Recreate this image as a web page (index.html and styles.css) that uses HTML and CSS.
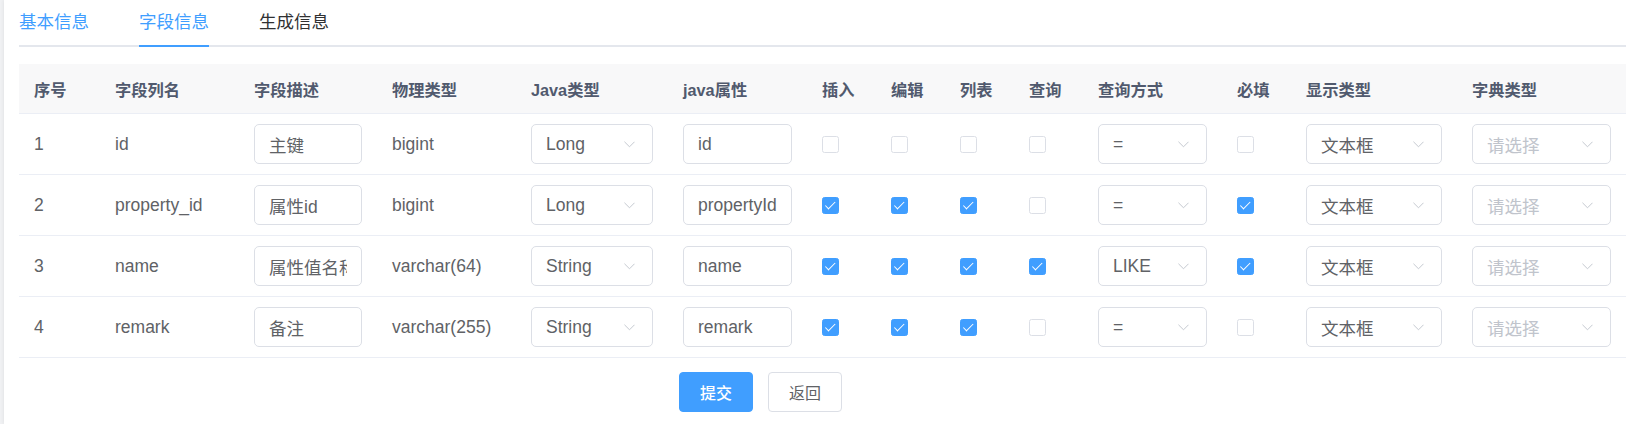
FILE: index.html
```html
<!DOCTYPE html>
<html>
<head>
	<meta charset="utf-8">
	<link rel="stylesheet" href="styles.css">
</head>
<body>
	<div class="card">
		<div class="tabs">
			<div class="tab-item hover">基本信息</div>
			<div class="tab-item active">字段信息</div>
			<div class="tab-item">生成信息</div>
		</div>

		<table class="column-table">
			<colgroup>
				<col style="width:81px"><col style="width:139px"><col style="width:138px"><col style="width:139px">
				<col style="width:152px"><col style="width:139px"><col style="width:69px"><col style="width:69px">
				<col style="width:69px"><col style="width:69px"><col style="width:139px"><col style="width:69px">
				<col style="width:166px"><col>
			</colgroup>
			<thead>
				<tr>
					<th><div class="cell">序号</div></th>
					<th><div class="cell">字段列名</div></th>
					<th><div class="cell">字段描述</div></th>
					<th><div class="cell">物理类型</div></th>
					<th><div class="cell">Java类型</div></th>
					<th><div class="cell">java属性</div></th>
					<th><div class="cell">插入</div></th>
					<th><div class="cell">编辑</div></th>
					<th><div class="cell">列表</div></th>
					<th><div class="cell">查询</div></th>
					<th><div class="cell">查询方式</div></th>
					<th><div class="cell">必填</div></th>
					<th><div class="cell">显示类型</div></th>
					<th><div class="cell">字典类型</div></th>
				</tr>
			</thead>
			<tbody>
				<tr>
					<td><div class="cell">1</div></td>
					<td><div class="cell">id</div></td>
					<td><div class="cell"><input class="input" value="主键"></div></td>
					<td><div class="cell">bigint</div></td>
					<td><div class="cell"><div class="select"><span>Long</span><svg class="arrow" viewBox="0 0 12 7"><polyline points="0.5,0.5 6,6 11.5,0.5"/></svg></div></div></td>
					<td><div class="cell"><input class="input" value="id"></div></td>
					<td><div class="cell"><span class="checkbox"></span></div></td>
					<td><div class="cell"><span class="checkbox"></span></div></td>
					<td><div class="cell"><span class="checkbox"></span></div></td>
					<td><div class="cell"><span class="checkbox"></span></div></td>
					<td><div class="cell"><div class="select"><span>=</span><svg class="arrow" viewBox="0 0 12 7"><polyline points="0.5,0.5 6,6 11.5,0.5"/></svg></div></div></td>
					<td><div class="cell"><span class="checkbox"></span></div></td>
					<td><div class="cell"><div class="select"><span>文本框</span><svg class="arrow" viewBox="0 0 12 7"><polyline points="0.5,0.5 6,6 11.5,0.5"/></svg></div></div></td>
					<td><div class="cell"><div class="select placeholder"><span>请选择</span><svg class="arrow" viewBox="0 0 12 7"><polyline points="0.5,0.5 6,6 11.5,0.5"/></svg></div></div></td>
				</tr>
				<tr>
					<td><div class="cell">2</div></td>
					<td><div class="cell">property_id</div></td>
					<td><div class="cell"><input class="input" value="属性id"></div></td>
					<td><div class="cell">bigint</div></td>
					<td><div class="cell"><div class="select"><span>Long</span><svg class="arrow" viewBox="0 0 12 7"><polyline points="0.5,0.5 6,6 11.5,0.5"/></svg></div></div></td>
					<td><div class="cell"><input class="input" value="propertyId"></div></td>
					<td><div class="cell"><span class="checkbox checked"></span></div></td>
					<td><div class="cell"><span class="checkbox checked"></span></div></td>
					<td><div class="cell"><span class="checkbox checked"></span></div></td>
					<td><div class="cell"><span class="checkbox"></span></div></td>
					<td><div class="cell"><div class="select"><span>=</span><svg class="arrow" viewBox="0 0 12 7"><polyline points="0.5,0.5 6,6 11.5,0.5"/></svg></div></div></td>
					<td><div class="cell"><span class="checkbox checked"></span></div></td>
					<td><div class="cell"><div class="select"><span>文本框</span><svg class="arrow" viewBox="0 0 12 7"><polyline points="0.5,0.5 6,6 11.5,0.5"/></svg></div></div></td>
					<td><div class="cell"><div class="select placeholder"><span>请选择</span><svg class="arrow" viewBox="0 0 12 7"><polyline points="0.5,0.5 6,6 11.5,0.5"/></svg></div></div></td>
				</tr>
				<tr>
					<td><div class="cell">3</div></td>
					<td><div class="cell">name</div></td>
					<td><div class="cell"><input class="input" value="属性值名称"></div></td>
					<td><div class="cell">varchar(64)</div></td>
					<td><div class="cell"><div class="select"><span>String</span><svg class="arrow" viewBox="0 0 12 7"><polyline points="0.5,0.5 6,6 11.5,0.5"/></svg></div></div></td>
					<td><div class="cell"><input class="input" value="name"></div></td>
					<td><div class="cell"><span class="checkbox checked"></span></div></td>
					<td><div class="cell"><span class="checkbox checked"></span></div></td>
					<td><div class="cell"><span class="checkbox checked"></span></div></td>
					<td><div class="cell"><span class="checkbox checked"></span></div></td>
					<td><div class="cell"><div class="select"><span>LIKE</span><svg class="arrow" viewBox="0 0 12 7"><polyline points="0.5,0.5 6,6 11.5,0.5"/></svg></div></div></td>
					<td><div class="cell"><span class="checkbox checked"></span></div></td>
					<td><div class="cell"><div class="select"><span>文本框</span><svg class="arrow" viewBox="0 0 12 7"><polyline points="0.5,0.5 6,6 11.5,0.5"/></svg></div></div></td>
					<td><div class="cell"><div class="select placeholder"><span>请选择</span><svg class="arrow" viewBox="0 0 12 7"><polyline points="0.5,0.5 6,6 11.5,0.5"/></svg></div></div></td>
				</tr>
				<tr>
					<td><div class="cell">4</div></td>
					<td><div class="cell">remark</div></td>
					<td><div class="cell"><input class="input" value="备注"></div></td>
					<td><div class="cell">varchar(255)</div></td>
					<td><div class="cell"><div class="select"><span>String</span><svg class="arrow" viewBox="0 0 12 7"><polyline points="0.5,0.5 6,6 11.5,0.5"/></svg></div></div></td>
					<td><div class="cell"><input class="input" value="remark"></div></td>
					<td><div class="cell"><span class="checkbox checked"></span></div></td>
					<td><div class="cell"><span class="checkbox checked"></span></div></td>
					<td><div class="cell"><span class="checkbox checked"></span></div></td>
					<td><div class="cell"><span class="checkbox"></span></div></td>
					<td><div class="cell"><div class="select"><span>=</span><svg class="arrow" viewBox="0 0 12 7"><polyline points="0.5,0.5 6,6 11.5,0.5"/></svg></div></div></td>
					<td><div class="cell"><span class="checkbox"></span></div></td>
					<td><div class="cell"><div class="select"><span>文本框</span><svg class="arrow" viewBox="0 0 12 7"><polyline points="0.5,0.5 6,6 11.5,0.5"/></svg></div></div></td>
					<td><div class="cell"><div class="select placeholder"><span>请选择</span><svg class="arrow" viewBox="0 0 12 7"><polyline points="0.5,0.5 6,6 11.5,0.5"/></svg></div></div></td>
				</tr>
			</tbody>
		</table>

		<div class="form-actions">
			<button class="btn btn-primary">提交</button>
			<button class="btn">返回</button>
		</div>
	</div>
</body>
</html>
```

FILE: styles.css
```css
	html, body {
		margin: 0;
		height: 100%;
		overflow: hidden;
	}
	body {
		background: #f0f1f3;
		font-family: "Liberation Sans", "Noto Sans CJK SC", sans-serif;
		color: #606266;
	}

	.card {
		box-sizing: border-box;
		min-height: 100%;
		margin-left: 4px;
		padding: 0 6px 0 15px;
		background: #fff;
		box-shadow: -1px 0 3px rgba(0, 0, 0, 0.05);
	}

	/* tabs */
	.tabs {
		display: flex;
		height: 45px;
		border-bottom: 2px solid #e4e7ed;
	}
	.tab-item {
		position: relative;
		padding: 0 25px;
		line-height: 45px;
		font-size: 17.5px;
		color: #303133;
	}
	.tab-item:first-child {
		padding-left: 0;
	}
	.tab-item.hover,
	.tab-item.active {
		color: #409eff;
	}
	.tab-item.active::after {
		content: "";
		position: absolute;
		left: 25px;
		right: 25px;
		bottom: -2px;
		height: 2px;
		background: #409eff;
	}

	/* table */
	.column-table {
		width: 100%;
		margin-top: 17px;
		table-layout: fixed;
		border-collapse: separate;
		border-spacing: 0;
	}
	.column-table th,
	.column-table td {
		padding: 0;
		text-align: left;
		border-bottom: 1px solid #ebeef5;
	}
	.column-table th {
		background: #f8f8f9;
		color: #515a6e;
		font-size: 16.25px;
		font-weight: bold;
	}
	.column-table .cell {
		display: flex;
		align-items: center;
		padding: 0 15px;
		white-space: nowrap;
		overflow: hidden;
	}
	.column-table th .cell {
		height: 49px;
	}
	.column-table td .cell {
		height: 60px;
		font-size: 17.5px;
	}

	.input {
		box-sizing: border-box;
		width: 100%;
		height: 40px;
		padding: 0 14px;
		border: 1px solid #dcdfe6;
		border-radius: 5px;
		font-family: inherit;
		font-size: 17.5px;
		color: #606266;
		outline: none;
	}

	.select {
		box-sizing: border-box;
		display: flex;
		align-items: center;
		justify-content: space-between;
		width: 100%;
		height: 40px;
		padding: 0 17px 0 14px;
		border: 1px solid #dcdfe6;
		border-radius: 5px;
		background: #fff;
		color: #606266;
	}
	.select.placeholder {
		color: #c0c4cc;
	}
	.arrow {
		width: 11px;
		height: 7px;
		fill: none;
		stroke: #c0c4cc;
		stroke-width: 1;
	}

	.checkbox {
		position: relative;
		box-sizing: border-box;
		display: inline-block;
		width: 17px;
		height: 17px;
		border: 1px solid #dcdfe6;
		border-radius: 2.5px;
		background: #fff;
	}
	.checkbox.checked {
		background: #409eff;
		border-color: #409eff;
	}
	.checkbox.checked::after {
		content: "";
		position: absolute;
		left: 5px;
		top: 1.5px;
		width: 3.5px;
		height: 8.5px;
		border: 1.25px solid #fff;
		border-left: 0;
		border-top: 0;
		transform: rotate(45deg);
	}

	/* form buttons */
	.form-actions {
		display: flex;
		justify-content: center;
		gap: 15px;
		margin-top: 14px;
		padding-right: 124px;
	}
	.btn {
		box-sizing: border-box;
		width: 74px;
		height: 40px;
		border: 1px solid #dcdfe6;
		border-radius: 4px;
		background: #fff;
		font-family: inherit;
		font-size: 16px;
		color: #606266;
	}
	.btn-primary {
		background: #409eff;
		border-color: #409eff;
		color: #fff;
		font-weight: 500;
	}
```
